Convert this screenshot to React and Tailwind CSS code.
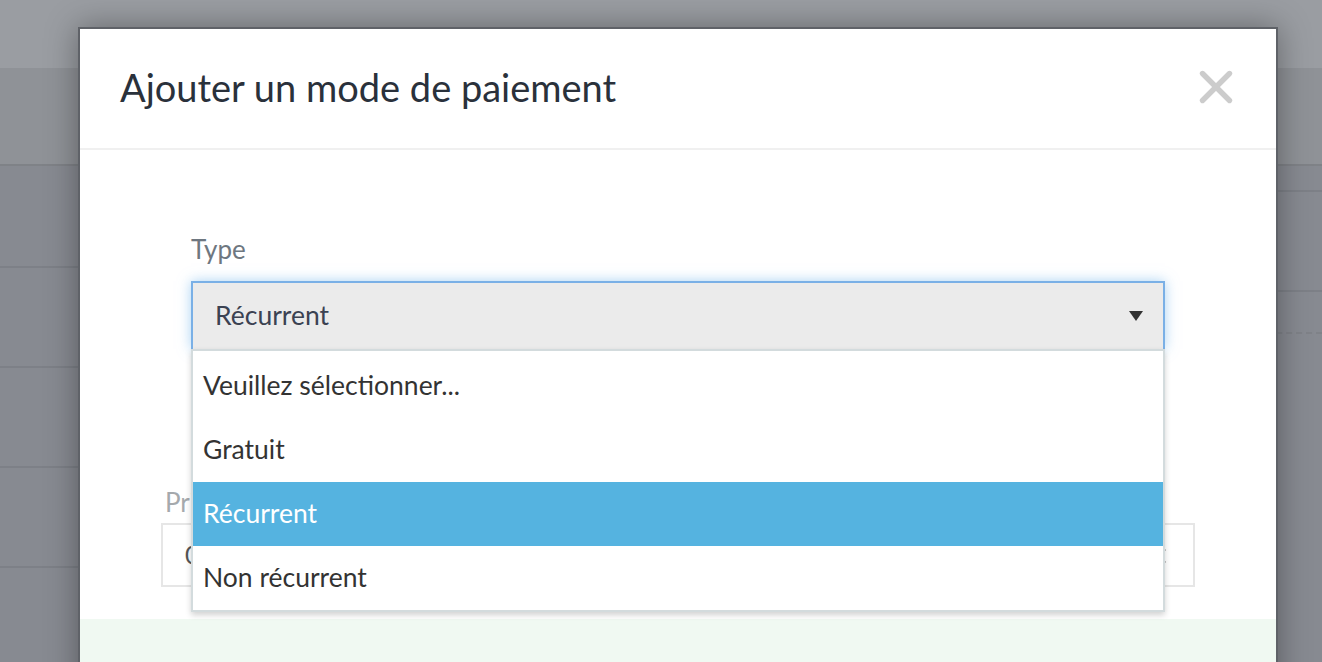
import { X } from 'lucide-react'

const options = ['Veuillez sélectionner...', 'Gratuit', 'Récurrent', 'Non récurrent']

function PageBehind() {
  return (
    <div className="h-full w-full bg-[#878a91]">
      <div className="h-[68px] bg-[#9a9da2]" />
      <div className="h-[98px] bg-[#8f9297] border-b-2 border-[#7f8287]" />
      <div className="flex">
        <div className="w-[600px]">
          <div className="h-[102px] border-b-2 border-[#7d8087]" />
          <div className="h-[100px] border-b-2 border-[#7d8087]" />
          <div className="h-[100px] border-b-2 border-[#7d8087]" />
          <div className="h-[100px] border-b-2 border-[#7d8087]" />
        </div>
        <div className="flex-1">
          <div className="h-[26px] border-b-2 border-[#7d8087]" />
          <div className="h-[100px] border-b-2 border-[#7d8087]" />
          <div className="h-[42px] border-b-2 border-dashed border-[#7f8288]" />
        </div>
      </div>
    </div>
  )
}

function TypeSelect() {
  return (
    <div className="relative">
      <div className="h-[68px] flex items-center justify-between bg-[#ebebeb] border-2 border-b-0 border-[#7ab0e6] shadow-[0_0_12px_rgba(102,175,233,0.55)] pl-[22px] pr-[20px]">
        <span className="text-[26.5px] text-[#3b4252]">Récurrent</span>
        <svg width="14" height="10" viewBox="0 0 14 10">
          <path d="M0 0h14L7 10z" fill="#333" />
        </svg>
      </div>
      <ul className="absolute left-0 right-0 top-full z-10 bg-white border-2 border-[#d3dbdd] pt-[3px] shadow-[0_3px_6px_rgba(0,0,0,0.18)]">
        {options.map((o) => (
          <li
            key={o}
            className={`h-[64px] flex items-center pl-[10px] text-[26.5px] ${
              o === 'Récurrent' ? 'bg-[#55b3e0] text-white' : 'text-[#333]'
            }`}
          >
            {o}
          </li>
        ))}
      </ul>
    </div>
  )
}

export default function App() {
  return (
    <div className="relative w-[1322px] h-[662px] overflow-hidden" style={{ fontFamily: 'Lato, "Noto Sans", sans-serif' }}>
      <PageBehind />

      {/* Modal */}
      <div className="absolute left-[78px] top-[27px] w-[1200px] h-[680px] bg-white border-2 border-b-0 border-[#5f6268] shadow-[0_0_30px_rgba(0,0,0,0.35)] flex flex-col">
        <div className="h-[121px] flex items-center justify-between pl-[40px] pr-[40px] border-b-2 border-[#f0f0f0]">
          <h1 className="text-[38px] text-[#2a313b] mt-[-2px]">Ajouter un mode de paiement</h1>
          <X size={54} strokeWidth={2.4} color="#cccccc" className="mr-[-7px] mt-[-3px]" />
        </div>

        <div className="px-[81px] pt-[82px]">
          <div className="px-[30px]">
            <label className="block text-[26px] text-[#6e7780] leading-[34px] mb-[15px]">Type</label>
            <TypeSelect />
          </div>

          <div className="mt-[136px]">
            <label className="block text-[26px] text-[#a5a9ad] leading-[34px] mb-[4px] pl-[4px]">Prix</label>
            <div className="h-[64px] border-2 border-[#e6e6e6] flex items-center justify-between pl-[22px] pr-[22px]">
              <span className="text-[25px] text-[#555]">0</span>
              <svg width="14" height="40" viewBox="0 0 14 40">
                <path d="M2 10l6 6M2 32l6-6" stroke="#777" strokeWidth="2.5" fill="none" />
              </svg>
            </div>
          </div>
        </div>

        <div className="mt-[32px] flex-1 bg-[#f0f9f2]" />
      </div>
    </div>
  )
}
